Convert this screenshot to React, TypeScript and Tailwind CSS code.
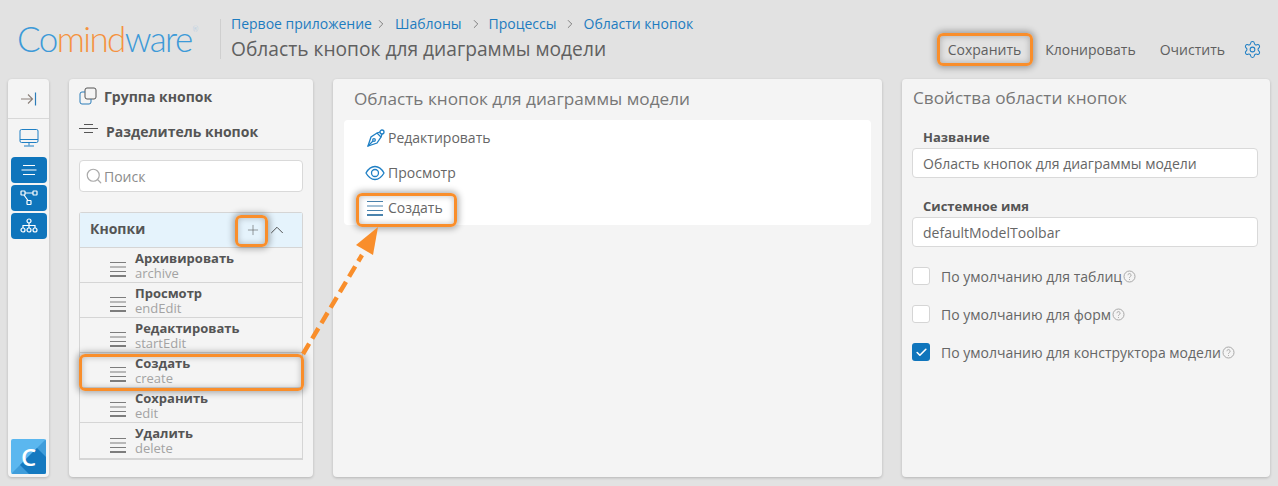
import { ChevronRight, ChevronUp, Plus, Search, Settings, Check } from "lucide-react"

const font = { fontFamily: '"Open Sans", "Noto Sans", sans-serif' }

const orangeBox = "absolute rounded-[6px] border-[3px] border-[#f98e2b] shadow-[0_0_6px_2px_rgba(0,0,0,0.3),inset_0_0_6px_rgba(0,0,0,0.25)] pointer-events-none"

const Lines = ({ color = "#7d7d7d" }: { color?: string }) => (
  <svg width="16" height="16" viewBox="0 0 16 16" className="shrink-0">
    <path d="M0 1.500h16M0 6h16M0 10.500h16" stroke={color} strokeWidth="1" />
    <path d="M0 15h16" stroke={color} strokeWidth="2" />
  </svg>
)

const SideButton = ({ children }: { children: React.ReactNode }) => (
  <div className="w-[36px] h-[26px] rounded-[4px] bg-[#0f75bc] flex items-center justify-center">{children}</div>
)

const Crumb = ({ text, chevron }: { text: string; chevron?: string }) => (
  <>
    <span className="text-[#1d7cc0]">{text}</span>
    {chevron && <ChevronRight size={14} strokeWidth={1.2} className={`text-[#555] ${chevron}`} />}
  </>
)

const buttons = [
  ["Архивировать", "archive"],
  ["Просмотр", "endEdit"],
  ["Редактировать", "startEdit"],
  ["Создать", "create"],
  ["Сохранить", "edit"],
  ["Удалить", "delete"],
]

const Help = () => (
  <svg width="13" height="13" viewBox="0 0 13 13" className="ml-[1px] shrink-0">
    <circle cx="6.500" cy="6.500" r="5.500" fill="none" stroke="#a8a8a8" />
    <path d="M4.900 5.200a1.600 1.600 0 1 1 2.400 1.400c-.6.350-.8.600-.8 1.200M6.500 9v.9" fill="none" stroke="#a8a8a8" />
  </svg>
)

const CheckRow = ({ label, checked }: { label: string; checked?: boolean }) => (
  <div className="flex items-center h-[18px]">
    {checked ? (
      <div className="w-[18px] h-[18px] rounded-[3px] bg-[#0f75bc] flex items-center justify-center">
        <Check size={13} strokeWidth={3} className="text-white" />
      </div>
    ) : (
      <div className="w-[18px] h-[18px] rounded-[3px] bg-white border border-[#d5d5d5]" />
    )}
    <span className="ml-[11px] text-[14px] text-[#666]">{label}</span>
    <Help />
  </div>
)

const App = () => {
  return (
    <div className="relative w-[1278px] h-[486px] overflow-hidden bg-[#e2e2e2] text-[#555]" style={font}>
      <header className="h-[79px] flex">
        <div className="w-[220px] pl-[17px] pt-[21px] shrink-0">
          <div className="flex items-start leading-none tracking-[-1.6px] text-[35px] font-light" style={{ fontFamily: "Lato, sans-serif" }}>
            <span className="text-[#3d9ad8]">Co</span>
            <span className="text-[#f5923e]">mind</span>
            <span className="text-[#3d9ad8]">ware</span>
            <span className="text-[7px] text-[#9cc6e2] mt-[5px] ml-[1px] tracking-normal">®</span>
          </div>
        </div>
        <div className="mt-[19px] h-[40px] border-l border-[#cfcfcf] pl-[10px] shrink-0">
          <div className="flex items-center text-[14px] leading-[20px] -mt-[5px]">
            <Crumb text="Первое приложение" chevron="ml-[2px] mr-[7px]" />
            <Crumb text="Шаблоны" chevron="ml-[7px] mr-[6px]" />
            <Crumb text="Процессы" chevron="ml-[6px] mr-[7px]" />
            <Crumb text="Области кнопок" />
          </div>
          <div className="text-[19.2px] leading-[26px] mt-[2px] text-[#606060]">Область кнопок для диаграммы модели</div>
        </div>
        <div className="ml-auto flex items-center h-[34px] mt-[32px] pr-[16px] text-[14px] text-[#5f5f5f]">
          <span>Сохранить</span>
          <span className="ml-[24px]">Клонировать</span>
          <span className="ml-[24px]">Очистить</span>
          <Settings size={19} strokeWidth={1.3} className="ml-[18px] text-[#1f7fc4]" />
        </div>
      </header>

      <main className="flex h-[398px] pl-[8px] gap-[20px]">
        <aside className="w-[41px] rounded-[4px] bg-[#f4f4f4] shadow-[0_1px_3px_rgba(0,0,0,0.2)] flex flex-col items-center">
          <div className="w-full h-[40px] border-b border-[#d8d8d8] flex items-center justify-center">
            <svg width="18" height="16" viewBox="0 0 18 16">
              <path d="M1 8h11M8 3.500 12.500 8 8 12.500" fill="none" stroke="#8a7f78" strokeWidth="1.100" />
              <path d="M15.500 1.500v13" stroke="#2b7cb9" strokeWidth="1.200" />
            </svg>
          </div>
          <svg width="20" height="20" viewBox="0 0 20 20" className="mt-[9px] mb-[9px]" fill="none" stroke="#1f7fc4">
            <rect x="1" y="1.500" width="18" height="13" rx="1.500" />
            <path d="M1 11.500h18M10 14.500v3M5 18h10" />
          </svg>
          <div className="flex flex-col gap-[2px]">
            <SideButton>
              <svg width="16" height="12" viewBox="0 0 16 12" stroke="#fff" strokeWidth="1.200" fill="none">
                <path d="M2 1.500h12M0.500 6h15M2 10.500h12" />
              </svg>
            </SideButton>
            <SideButton>
              <svg width="18" height="16" viewBox="0 0 18 16" stroke="#fff" strokeWidth="1.200" fill="none">
                <rect x="1" y="1" width="4" height="4" rx="0.500" />
                <rect x="13" y="1" width="4" height="4" rx="0.500" />
                <rect x="7" y="10.500" width="4" height="4" rx="0.500" />
                <path d="M5 3h8M4 5l4 5.500" />
              </svg>
            </SideButton>
            <SideButton>
              <svg width="18" height="16" viewBox="0 0 18 16" stroke="#fff" strokeWidth="1.200" fill="none">
                <circle cx="9" cy="3" r="2" />
                <circle cx="3" cy="12" r="2" />
                <circle cx="9" cy="12" r="2" />
                <circle cx="15" cy="12" r="2" />
                <path d="M9 5v5M3 10V7.500h12V10" />
              </svg>
            </SideButton>
          </div>
          <div className="mt-auto mb-[3px] w-[35px] h-[35px] rounded-[2px] overflow-hidden relative bg-[#5bb7ef] flex items-center justify-center">
            <svg width="35" height="35" viewBox="0 0 35 35" className="absolute inset-0">
              <path d="M35 0v35H0z" fill="#3f9ddb" />
              <path d="M35 18v17H18L9 26l8-8 9-9z" fill="#1479c0" />
            </svg>
            <span className="relative text-white text-[24px] font-semibold leading-none">C</span>
          </div>
        </aside>

        <section className="w-[244px] rounded-[4px] bg-[#f4f4f4] shadow-[0_1px_3px_rgba(0,0,0,0.2)] flex flex-col">
          <div className="h-[71px] border-b border-[#dcdcdc] px-[10px] pt-[7px] font-bold text-[14px] text-[#555]">
            <div className="flex items-center h-[20px]">
              <svg width="18" height="18" viewBox="0 0 18 18" fill="none" stroke="#666" className="shrink-0">
                <rect x="6" y="1" width="11" height="11" rx="2" stroke="#555" />
                <path d="M6 5H3a2 2 0 0 0-2 2v8a2 2 0 0 0 2 2h7a2 2 0 0 0 2-2v-3" stroke="#2b7cb9" />
              </svg>
              <span className="ml-[7px]">Группа кнопок</span>
            </div>
            <div className="flex items-center h-[20px] mt-[15px]">
              <svg width="19" height="12" viewBox="0 0 19 12" stroke="#555" className="shrink-0 -mt-[5px]">
                <path d="M5 1.500h9M0 5.500h19M5 9.500h9" />
              </svg>
              <span className="ml-[8px]">Разделитель кнопок</span>
            </div>
          </div>
          <div className="mx-[10px] mt-[10px] h-[32px] rounded-[4px] bg-white border border-[#d9d9d9] flex items-center pl-[5px] text-[14px] text-[#8c8c8c]">
            <Search size={18} strokeWidth={1.6} className="text-[#aaa]" />
            <span className="ml-[1px]">Поиск</span>
          </div>
          <div className="mx-[10px] mt-[20px] border border-[#d5d5d5] border-b-2 rounded-t-[3px]">
            <div className="h-[35px] bg-[#e5f3fc] flex items-center pl-[10px] pr-[14px] font-bold text-[14px] text-[#555] border-b border-[#d5d5d5]">
              <span className="-mt-[4px]">Кнопки</span>
              <Plus size={16} strokeWidth={1} className="ml-auto mr-[5px] text-[#666]" />
              <ChevronUp size={22} strokeWidth={1} className="text-[#444]" />
            </div>
            {buttons.map(([title, sys], i) => (
              <div key={sys} className={`h-[35px] flex items-center pl-[30px] ${i < 5 ? "border-b border-[#d5d5d5]" : ""}`}>
                <div className="mt-[8px]"><Lines /></div>
                <div className="ml-[9px] leading-[15px] mt-[1px]">
                  <div className="font-bold text-[13px] text-[#555]">{title}</div>
                  <div className="text-[13px] text-[#a3a3a3]">{sys}</div>
                </div>
              </div>
            ))}
          </div>
        </section>

        <section className="w-[549px] rounded-[4px] bg-[#f4f4f4] shadow-[0_1px_3px_rgba(0,0,0,0.2)] flex flex-col px-[11px]">
          <div className="h-[41px] pl-[10px] pt-[9px] text-[17.2px] leading-[22px] text-[#777]">Область кнопок для диаграммы модели</div>
          <div className="h-[105px] bg-white rounded-[4px] pl-[23px] text-[14px] text-[#666]">
            <div className="h-[35px] flex items-center">
              <svg width="18" height="18" viewBox="0 0 18 18" fill="none" stroke="#1f7fc4" strokeWidth="1.300" className="shrink-0">
                <path d="M1 17l3-9 6-4 4 4-4 6z" />
                <path d="M1 17l5-5" />
                <circle cx="7" cy="11" r="1.300" />
                <circle cx="15" cy="3" r="2" />
                <path d="M10 4l3-1M14 8l1-3" />
              </svg>
              <span className="ml-[3px]">Редактировать</span>
            </div>
            <div className="h-[35px] flex items-center">
              <svg width="20" height="16" viewBox="0 0 20 16" fill="none" stroke="#1f7fc4" strokeWidth="1.300" className="shrink-0 -ml-[2px]">
                <path d="M1 8c2.500-4.500 5.500-6.500 9-6.500S16.500 3.500 19 8c-2.500 4.500-5.500 6.500-9 6.500S3.500 12.500 1 8z" />
                <circle cx="10" cy="8" r="3.500" />
              </svg>
              <span className="ml-[3px]">Просмотр</span>
            </div>
            <div className="h-[35px] flex items-center">
              <Lines color="#4a83ad" />
              <span className="ml-[5px]">Создать</span>
            </div>
          </div>
        </section>

        <section className="w-[368px] rounded-[4px] bg-[#f4f4f4] shadow-[0_1px_3px_rgba(0,0,0,0.2)] px-[10px]">
          <div className="h-[40px] pl-[1px] pt-[8px] text-[17.2px] leading-[22px] text-[#777]">Свойства области кнопок</div>
          <label className="block pl-[11px] pt-[9px] font-bold text-[13px] leading-[18px] text-[#555]">Название</label>
          <div className="mt-[2px] h-[30px] w-[346px] rounded-[4px] bg-white border border-[#d9d9d9] flex items-center pl-[10px] text-[14px] text-[#666]">Область кнопок для диаграммы модели</div>
          <label className="block pl-[11px] pt-[19px] font-bold text-[13px] leading-[18px] text-[#555]">Системное имя</label>
          <div className="mt-[2px] h-[30px] w-[346px] rounded-[4px] bg-white border border-[#d9d9d9] flex items-center pl-[10px] text-[14px] text-[#666]">defaultModelToolbar</div>
          <div className="mt-[20px] flex flex-col gap-[20px]">
            <CheckRow label="По умолчанию для таблиц" />
            <CheckRow label="По умолчанию для форм" />
            <CheckRow label="По умолчанию для конструктора модели" checked />
          </div>
        </section>
      </main>

      {/* callouts on top of the screen */}
      <div className={`${orangeBox} left-[937px] top-[33px] w-[96px] h-[33px]`} />
      <div className={`${orangeBox} left-[235px] top-[215px] w-[33px] h-[32px]`} />
      <div className={`${orangeBox} left-[79px] top-[354px] w-[225px] h-[37px]`} />
      <div className={`${orangeBox} left-[356px] top-[193px] w-[101px] h-[34px]`} />
      <svg width="1278" height="486" className="absolute inset-0 pointer-events-none">
        <path d="M303 354 362 255" stroke="#f98e2b" strokeWidth="4.500" strokeDasharray="12 6" fill="none" />
        <path d="M378 227 356 245 373 255z" fill="#f98e2b" />
      </svg>
    </div>
  )
}

export default App
